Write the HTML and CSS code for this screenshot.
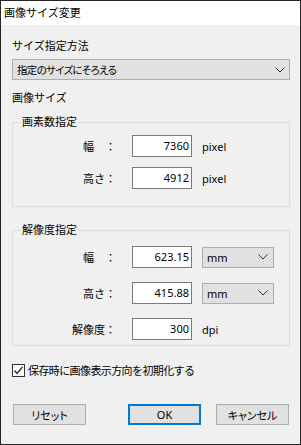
FILE: index.html
```html
<!DOCTYPE html>
<html lang="ja">
  <head>
    <meta charset="UTF-8" />
    <meta name="viewport" content="width=device-width, initial-scale=1.0" />
    <title>画像サイズ変更</title>
    <link rel="stylesheet" href="styles.css">
  </head>
  <body>
    <div class="window">
      <div class="titlebar">画像サイズ変更</div>

      <div class="content">
        <div class="label-top">サイズ指定方法</div>
        <div class="combo">
          <span class="combo-text">指定のサイズにそろえる</span>
          <svg class="chevron" width="10" height="6" viewBox="0 0 10 6">
            <polyline points="0.5,0.5 5,5 9.5,0.5" fill="none" stroke="#333" stroke-width="1" />
          </svg>
        </div>

        <div class="label-size">画像サイズ</div>

        <fieldset class="group group-pixel">
          <legend>画素数指定</legend>
          <div class="row">
            <span class="row-label">幅　：</span>
            <div class="num">7360</div>
            <span class="unit">pixel</span>
          </div>
          <div class="row">
            <span class="row-label">高さ：</span>
            <div class="num">4912</div>
            <span class="unit">pixel</span>
          </div>
        </fieldset>

        <fieldset class="group group-res">
          <legend>解像度指定</legend>
          <div class="row">
            <span class="row-label">幅　：</span>
            <div class="num">623.15</div>
            <div class="select">
              <span>mm</span>
              <svg class="chevron" width="10" height="6" viewBox="0 0 10 6">
                <polyline points="0.5,0.5 5,5 9.5,0.5" fill="none" stroke="#333" stroke-width="1" />
              </svg>
            </div>
          </div>
          <div class="row">
            <span class="row-label">高さ：</span>
            <div class="num">415.88</div>
            <div class="select">
              <span>mm</span>
              <svg class="chevron" width="10" height="6" viewBox="0 0 10 6">
                <polyline points="0.5,0.5 5,5 9.5,0.5" fill="none" stroke="#333" stroke-width="1" />
              </svg>
            </div>
          </div>
          <div class="row">
            <span class="row-label">解像度：</span>
            <div class="num">300</div>
            <span class="unit">dpi</span>
          </div>
        </fieldset>

        <label class="check">
          <span class="check-box">
            <svg width="11" height="11" viewBox="0 0 11 11">
              <polyline points="1.5,5.5 4,8.5 9.5,2" fill="none" stroke="#222" stroke-width="1.2" />
            </svg>
          </span>
          <span class="check-text">保存時に画像表示方向を初期化する</span>
        </label>

        <div class="buttons">
          <button class="btn btn-reset">リセット</button>
          <div class="spacer"></div>
          <button class="btn btn-ok">OK</button>
          <button class="btn">キャンセル</button>
        </div>
      </div>
    </div>
  </body>
</html>
```

FILE: styles.css
```css
  body {
    margin: 0;
    font-family: "Noto Sans", "Noto Sans CJK JP", sans-serif;
    font-size: 11px;
    color: #000;
    background: #1e1e1e;
  }
  .window {
    width: 299px;
    height: 443px;
    border: 1px solid #262626;
    background: #f0f0f0;
    display: flex;
    flex-direction: column;
  }
  .titlebar {
    height: 24px;
    line-height: 24px;
    padding-left: 3px;
    background: #fff;
    font-size: 11px;
  }
  .content {
    padding: 0 10px 0 11px;
    display: flex;
    flex-direction: column;
  }
  .label-top {
    margin-top: 13px;
    line-height: 16px;
  }
  .combo {
    margin-top: 5px;
    height: 21px;
    box-sizing: border-box;
    border: 1px solid #adadad;
    background: #e1e1e1;
    display: flex;
    align-items: center;
    justify-content: space-between;
    padding: 0 4px 0 4px;
  }
  .combo-text {
    font-size: 10.5px;
    letter-spacing: -0.7px;
    font-feature-settings: "palt";
  }
  .label-size {
    margin-top: 10px;
    line-height: 16px;
  }
  .group {
    margin: 9px 0 0;
    padding: 6px 0 17px;
    border: 1px solid #dcdcdc;
    min-inline-size: 0;
  }
  .group legend {
    margin-left: 7px;
    padding: 0 2px;
    line-height: 14px;
  }
  .group-res {
    margin-top: 16px;
    padding: 9px 0 5px;
  }
  .row {
    display: flex;
    align-items: center;
    height: 22px;
  }
  .group-pixel .row + .row {
    margin-top: 10px;
  }
  .group-res .row + .row {
    margin-top: 14px;
  }
  .row-label {
    width: 103px;
    text-align: right;
  }
  .num {
    margin-left: 16px;
    width: 60px;
    height: 22px;
    box-sizing: border-box;
    border: 1px solid #7a7a7a;
    background: #fff;
    text-align: right;
    padding-right: 2px;
    line-height: 20px;
  }
  .unit {
    margin-left: 10px;
  }
  .select {
    margin-left: 10px;
    width: 72px;
    height: 21px;
    box-sizing: border-box;
    border: 1px solid #adadad;
    background: #e1e1e1;
    display: flex;
    align-items: center;
    justify-content: space-between;
    padding: 0 5px 0 4px;
  }
  .chevron {
    display: block;
  }
  .check {
    margin-top: 16px;
    height: 16px;
    display: flex;
    align-items: center;
  }
  .check-box {
    width: 13px;
    height: 13px;
    box-sizing: border-box;
    border: 1px solid #333;
    background: #fff;
    margin-right: 3px;
  }
  .check-box svg {
    display: block;
  }
  .check-text {
    letter-spacing: -0.6px;
  }
  .buttons {
    margin-top: 26px;
    display: flex;
    gap: 15px;
    padding: 0 1px;
  }
  .spacer {
    flex: 1;
  }
  .btn {
    width: 73px;
    height: 21px;
    box-sizing: border-box;
    border: 1px solid #adadad;
    background: #e1e1e1;
    font-family: inherit;
    font-size: 11px;
    color: #000;
    padding: 0;
    font-feature-settings: "palt";
  }
  .btn-ok {
    border: 2px solid #0078d7;
  }
```
